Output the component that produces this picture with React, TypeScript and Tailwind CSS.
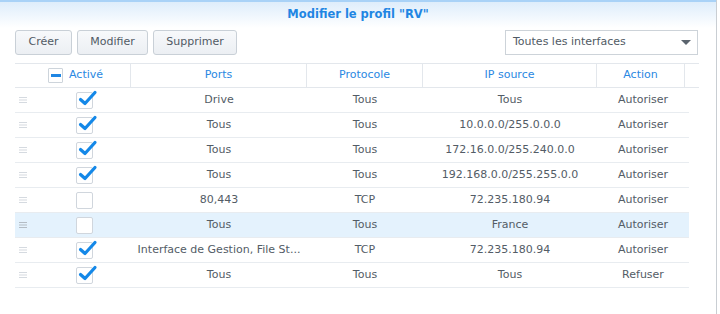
import React from "react";

type Row = { on: boolean; ports: string; proto: string; ip: string; action: string; hl?: boolean };

const rows: Row[] = [
  { on: true, ports: "Drive", proto: "Tous", ip: "Tous", action: "Autoriser" },
  { on: true, ports: "Tous", proto: "Tous", ip: "10.0.0.0/255.0.0.0", action: "Autoriser" },
  { on: true, ports: "Tous", proto: "Tous", ip: "172.16.0.0/255.240.0.0", action: "Autoriser" },
  { on: true, ports: "Tous", proto: "Tous", ip: "192.168.0.0/255.255.0.0", action: "Autoriser" },
  { on: false, ports: "80,443", proto: "TCP", ip: "72.235.180.94", action: "Autoriser" },
  { on: false, ports: "Tous", proto: "Tous", ip: "France", action: "Autoriser", hl: true },
  { on: true, ports: "Interface de Gestion, File St...", proto: "TCP", ip: "72.235.180.94", action: "Autoriser" },
  { on: true, ports: "Tous", proto: "Tous", ip: "Tous", action: "Refuser" },
];

function Handle({ dark }: { dark?: boolean }) {
  return (
    <svg width="8" height="6" viewBox="0 0 8 6" className="block">
      <rect x="0" y="0" width="8" height="1" fill={dark ? "#b4bcc4" : "#d5dae0"} />
      <rect x="0" y="2.5" width="8" height="1" fill={dark ? "#b4bcc4" : "#d5dae0"} />
      <rect x="0" y="5" width="8" height="1" fill={dark ? "#b4bcc4" : "#d5dae0"} />
    </svg>
  );
}

function Check({ on }: { on: boolean }) {
  return (
    <div className="relative w-[17px] h-[17px] rounded-[2px] border border-[#d0d6dd] bg-white">
      {on && (
        <svg width="20" height="18" viewBox="0 0 20 18" className="absolute left-[1px] top-[-3px]">
          <path d="M2.5 9.5 L7 13.5 L17 2.5" fill="none" stroke="#1488e8" strokeWidth="3.2" strokeLinecap="round" strokeLinejoin="round" />
        </svg>
      )}
    </div>
  );
}

export default function App() {
  const font = { fontFamily: '"DejaVu Sans", Verdana, sans-serif' };
  return (
    <div className="w-[720px] h-[314px] bg-white overflow-hidden relative" style={font}>
      <div className="w-[717px] h-[314px] border-r border-[#c9ced3] flex flex-col">
        <div className="h-[28px] border-t-2 border-[#a9d2f7] bg-gradient-to-b from-[#deedfb] to-[#ffffff] flex items-center justify-center">
          <span className="text-[11.5px] font-bold text-[#1f86e3]">Modifier le profil "RV"</span>
        </div>
        <div className="mt-[2px] h-[25px] px-[15px] flex items-stretch">
          <button className="w-[57px] h-[25px] rounded-[3px] border border-[#c9d0d7] bg-gradient-to-b from-[#f7f9fb] to-[#eceff3] text-[11px] text-[#505a64]">Créer</button>
          <button className="ml-[5px] w-[71px] h-[25px] rounded-[3px] border border-[#c9d0d7] bg-gradient-to-b from-[#f7f9fb] to-[#eceff3] text-[11px] text-[#505a64]">Modifier</button>
          <button className="ml-[5px] w-[84px] h-[25px] rounded-[3px] border border-[#c9d0d7] bg-gradient-to-b from-[#f7f9fb] to-[#eceff3] text-[11px] text-[#505a64]">Supprimer</button>
          <div className="ml-auto mr-[3px] w-[193px] h-[25px] border border-[#cdd3d9] bg-white flex items-center pl-[7px] pr-[6px]">
            <span className="text-[11px] text-[#505a64]">Toutes les interfaces</span>
            <svg width="10" height="6" viewBox="0 0 10 6" className="ml-auto">
              <path d="M0 0 L10 0 L5 5 Z" fill="#5b646e" />
            </svg>
          </div>
        </div>
        <div className="mt-[8px] ml-[15px] w-[684px]">
          <div className="h-[25px] border-t border-b border-[#e3e7ec] flex items-stretch text-[11px] text-[#2a88e2]">
            <div className="w-[116px] flex items-center pl-[33px] border-r border-[#e3e7ec]">
              <div className="w-[15px] h-[15px] border border-[#cdd4db] bg-white rounded-[1px] flex items-center justify-center">
                <div className="w-[10px] h-[3px] bg-[#1f86e3]" />
              </div>
              <span className="ml-[6px]">Activé</span>
            </div>
            <div className="w-[176px] flex items-center justify-center border-r border-[#e3e7ec]">Ports</div>
            <div className="w-[116px] flex items-center justify-center border-r border-[#e3e7ec]">Protocole</div>
            <div className="w-[174px] flex items-center justify-center border-r border-[#e3e7ec]">IP source</div>
            <div className="w-[88px] flex items-center justify-center border-r border-[#e3e7ec]">Action</div>
            <div className="flex-1" />
          </div>
          <div className="w-[674px]">
            {rows.map((r, i) => (
              <div
                key={i}
                className={`h-[25px] border-b border-[#e8ecf0] flex items-center text-[11px] text-[#535c66] ${r.hl ? "bg-[#e4f2fd]" : "bg-white"}`}
              >
                <div className="w-[116px] flex items-center pl-[4px]">
                  <Handle dark={r.hl} />
                  <div className="ml-[49px]">
                    <Check on={r.on} />
                  </div>
                </div>
                <div className="w-[176px] text-center whitespace-nowrap">{r.ports}</div>
                <div className="w-[116px] text-center">{r.proto}</div>
                <div className="w-[174px] text-center">{r.ip}</div>
                <div className="w-[92px] text-center">{r.action}</div>
              </div>
            ))}
          </div>
        </div>
      </div>
    </div>
  );
}
